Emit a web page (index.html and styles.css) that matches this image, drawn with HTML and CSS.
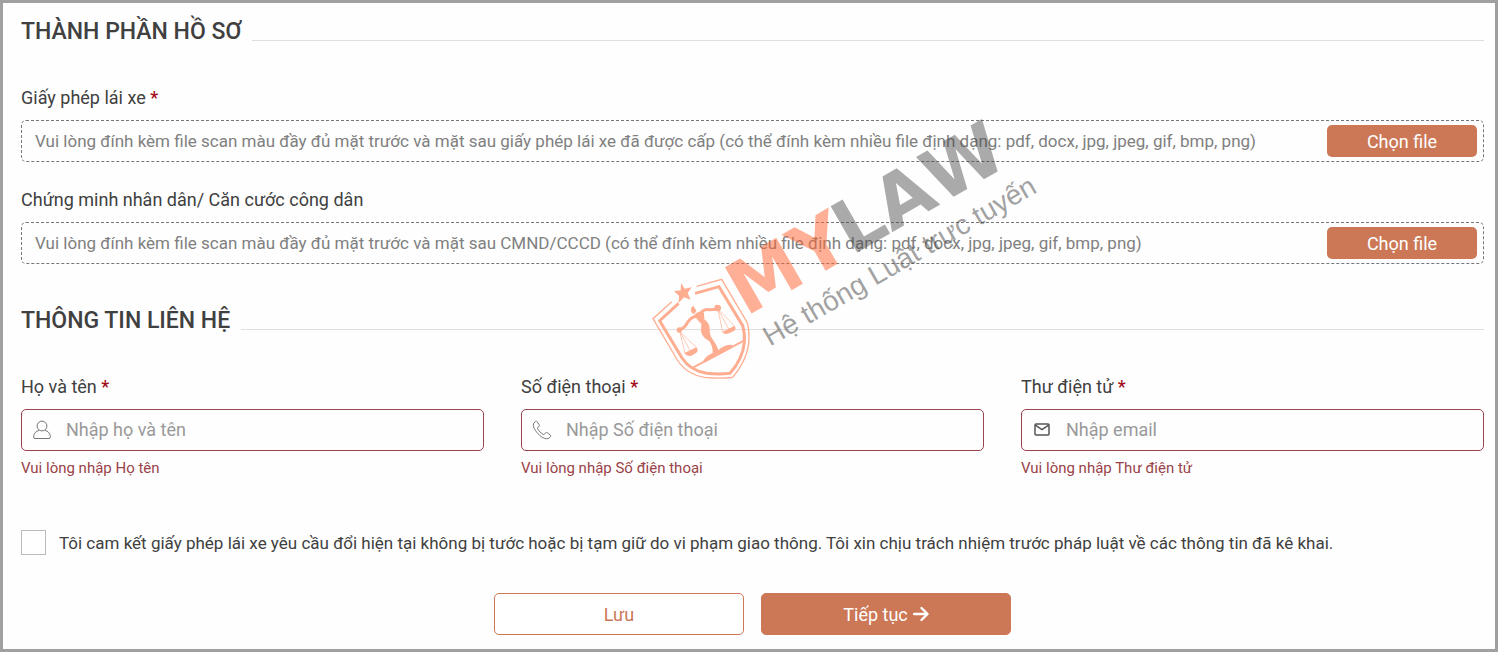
FILE: index.html
```html
<!DOCTYPE html>
<html lang="vi">
<head>
    <meta charset="UTF-8">
    <meta name="viewport" content="width=device-width, initial-scale=1">
    <title>Thành phần hồ sơ</title>
    <link rel="stylesheet" href="styles.css">
</head>
<body>
    <form class="page">
        <h2 class="section-title"><span>THÀNH PHẦN HỒ SƠ</span></h2>

        <div class="field">
            <label for="license">Giấy phép lái xe <span class="required">*</span></label>
            <div class="file-box">
                <input type="text" id="license" readonly placeholder="Vui lòng đính kèm file scan màu đầy đủ mặt trước và mặt sau giấy phép lái xe đã được cấp (có thể đính kèm nhiều file định dạng: pdf, docx, jpg, jpeg, gif, bmp, png)">
                <button type="button" class="btn-file">Chọn file</button>
            </div>
        </div>

        <div class="field">
            <label for="idcard">Chứng minh nhân dân/ Căn cước công dân</label>
            <div class="file-box">
                <input type="text" id="idcard" readonly placeholder="Vui lòng đính kèm file scan màu đầy đủ mặt trước và mặt sau CMND/CCCD (có thể đính kèm nhiều file định dạng: pdf, docx, jpg, jpeg, gif, bmp, png)">
                <button type="button" class="btn-file">Chọn file</button>
            </div>
        </div>

        <h2 class="section-title"><span>THÔNG TIN LIÊN HỆ</span></h2>

        <div class="contact">
            <div class="field">
                <label for="name">Họ và tên <span class="required">*</span></label>
                <div class="input-box">
                    <svg class="icon" viewBox="0 0 20 20">
                        <circle cx="10" cy="6" r="4.9"/>
                        <path d="M7 10.4C4 11.2 1.8 13.2 1.6 16.8Q1.6 18.5 3 18.5H17Q18.4 18.5 18.4 16.8C18.2 13.2 16 11.2 13 10.4"/>
                    </svg>
                    <input type="text" id="name" placeholder="Nhập họ và tên">
                </div>
                <p class="error">Vui lòng nhập Họ tên</p>
            </div>
            <div class="field">
                <label for="phone">Số điện thoại <span class="required">*</span></label>
                <div class="input-box">
                    <svg class="icon" viewBox="0 0 20 20">
                        <path d="M3.2 1.7C1.4 2.9.8 4.7 1.7 7C3.3 11.6 8 16.7 12.7 18.4C15.2 19.3 17.3 18.6 18.5 16.6Q19 15.7 18.2 15L15.3 12.7Q14.3 12 13.5 12.9L12.4 14.2Q11.9 14.8 11.1 14.4C8.7 13 6.8 11 5.6 8.7Q5.2 7.9 5.8 7.4L7 6.5Q7.8 5.8 7.2 4.8L5.4 2Q4.5.8 3.2 1.7Z"/>
                    </svg>
                    <input type="tel" id="phone" placeholder="Nhập Số điện thoại">
                </div>
                <p class="error">Vui lòng nhập Số điện thoại</p>
            </div>
            <div class="field">
                <label for="email">Thư điện tử <span class="required">*</span></label>
                <div class="input-box">
                    <svg class="icon icon-mail" viewBox="0 0 20 20">
                        <rect x="3" y="4" width="14" height="11" rx="1"/>
                        <path d="M3.4 5.2L10 9.6L16.6 5.2"/>
                    </svg>
                    <input type="email" id="email" placeholder="Nhập email">
                </div>
                <p class="error">Vui lòng nhập Thư điện tử</p>
            </div>
        </div>

        <div class="commit">
            <input type="checkbox" id="commit">
            <label for="commit">Tôi cam kết giấy phép lái xe yêu cầu đổi hiện tại không bị tước hoặc bị tạm giữ do vi phạm giao thông. Tôi xin chịu trách nhiệm trước pháp luật về các thông tin đã kê khai.</label>
        </div>

        <div class="actions">
            <button type="button" class="btn btn-outline">Lưu</button>
            <button type="submit" class="btn btn-primary">Tiếp tục
                <svg class="arrow" viewBox="0 0 16 16"><path d="M1 8H14M8.5 2L14.5 8L8.5 14"/></svg>
            </button>
        </div>

        <!-- watermark -->
        <svg class="watermark" viewBox="0 0 400 270">
            <g class="shield" transform="translate(-10 145) scale(.3333)">
                <path class="fill" d="M123 69L134 86L155 82L143 99L152 119L132 112L116 129L117 107L102 94L122 91Z"/>
                <path class="thin" d="M95 125L39 176L112 300C128 325 155 346 195 352Q240 357 278 352C298 330 322 290 326 250Q329 215 322 188L245 58L170 79"/>
                <path class="thick" d="M116 130L59 182L126 294C142 318 165 334 200 340Q238 344 270 340C290 318 309 285 313 248Q315 220 308 197L237 80L165 100"/>
                <path class="chord" d="M160 322L312 242"/>
                <!-- scales -->
                <g transform="translate(30 30)">
                    <circle class="fill" cx="88" cy="180" r="8"/>
                    <circle class="fill" cx="203" cy="114" r="10"/>
                    <path class="arm" d="M88 180Q103 175 111 160Q122 139 146 137Q158 116 178 119L203 118"/>
                    <path class="fill" d="M123 124Q121 113 130 107Q134 116 139 121Q136 133 128 131Z"/>
                    <path class="fill" d="M132 136Q144 120 162 128L163 148Q180 160 179 178Q178 197 190 211Q201 226 205 240Q224 223 246 224L245 234L166 277H158Q164 259 188 249Q189 230 178 214Q156 202 153 184L154 162Q143 152 132 136Z"/>
                    <path class="line" d="M89 184L105 250M89 184L121 243M89 184L139 233M204 118L218 186M204 118L236 177M204 118L254 168"/>
                    <path class="fill" d="M103 249L139 232Q148 244 137 250L124 257Q110 261 103 249ZM217 186L254 167Q261 178 250 184L237 190Q223 196 217 186Z"/>
                </g>
            </g>
            <g transform="translate(100 197) rotate(-30)">
                <text class="brand-my" x="-6" y="2">MY</text>
                <text class="brand-law" x="116" y="2">LAW</text>
                <text class="slogan" x="0" y="40">Hệ thống Luật trực tuyến</text>
            </g>
        </svg>
    </form>
</body>
</html>
```
FILE: styles.css
```css
* { box-sizing: border-box; }
body { margin: 0; font-family: Roboto, "Liberation Sans", sans-serif; font-size: 18px; line-height: 24px; color: #404040; background: #fefefe; }
input, button { font-family: inherit; font-size: 18px; }

.page { position: relative; min-height: 100vh; padding: 12px 11px 14px 18px; border: 3px solid #a0a0a0; }

.section-title { display: flex; align-items: flex-end; gap: 11px; height: 30px; margin: 0 0 41px; font-size: 23px; line-height: 26px; font-weight: 500; }
.section-title::after { content: ""; flex: 1; height: 1px; margin-bottom: 4px; background: #dfdfdf; }
.field + .section-title { margin-top: 40px; }
.field + .field { margin-top: 26px; }

.field label { display: block; margin-bottom: 10px; }
.required { color: #a00c18; font-weight: 500; }

.file-box { display: flex; align-items: center; height: 42px; padding: 0 6px 0 13px; border: 1px dashed #777; border-radius: 5px; }
.file-box input { flex: 1; min-width: 0; padding: 0; border: none; outline: none; background: none; font-size: 17px; line-height: 24px; text-overflow: ellipsis; }
.file-box input::placeholder { color: #808080; opacity: 1; }
.btn-file { width: 150px; height: 32px; margin-left: 20px; padding: 0; border: none; border-radius: 5px; background: #cc7857; color: #fff; cursor: pointer; }

.contact { display: grid; grid-template-columns: repeat(3, 1fr); gap: 37px; }
.contact .field { margin-top: 0; }
.input-box { display: flex; align-items: center; gap: 14px; height: 42px; padding: 0 10px; border: 1px solid #9a4450; border-radius: 5px; }
.input-box input { flex: 1; min-width: 0; padding: 0 0 2px; border: none; outline: none; background: none; color: #404040; }
.input-box input::placeholder { color: #999; opacity: 1; }
.icon { width: 20px; height: 20px; fill: none; stroke: #777; stroke-width: 1; }
.icon-mail { stroke: #555; stroke-width: 1.5; }
.error { margin: 7px 0 0; font-size: 15px; line-height: 20px; color: #9a4248; }

.commit { display: flex; align-items: center; gap: 13px; margin-top: 52px; font-size: 17px; }
.commit input { appearance: none; flex: none; width: 25px; height: 25px; margin: 0; border: 1px solid #bbb; background: #fff; }
.commit input:checked { background: #cc7857; }

.actions { display: flex; justify-content: center; gap: 17px; margin-top: 38px; }
.btn { display: flex; align-items: center; justify-content: center; gap: 5px; width: 250px; height: 42px; border: 1px solid #cc7857; border-radius: 5px; cursor: pointer; }
.btn-outline { background: #fff; color: #cc7857; }
.btn-primary { background: #cc7857; color: #fff; }
.arrow { width: 16px; height: 16px; fill: none; stroke: #fff; stroke-width: 2.4; stroke-linecap: round; stroke-linejoin: round; }

.watermark { position: absolute; top: 112px; left: calc(50% - 99px); width: 400px; height: 270px; overflow: visible; pointer-events: none; }
.shield { fill: none; stroke: #ffad91; }
.shield .fill { fill: #ffad91; stroke: none; }
.shield .thin { stroke-width: 4; }
.shield .thick { stroke-width: 9; }
.shield .chord { stroke-width: 6; }
.shield .arm { stroke-width: 9; }
.shield .line { stroke-width: 2; }
.brand-my, .brand-law { font-family: "DejaVu Sans", sans-serif; font-size: 73px; font-weight: bold; font-kerning: none; }
.brand-my { fill: #ff6633; fill-opacity: 0.52; }
.brand-law { fill: #444; fill-opacity: 0.45; }
.slogan { font-family: "Liberation Sans", Arial, sans-serif; font-size: 28px; fill: #444; fill-opacity: 0.5; }
```
